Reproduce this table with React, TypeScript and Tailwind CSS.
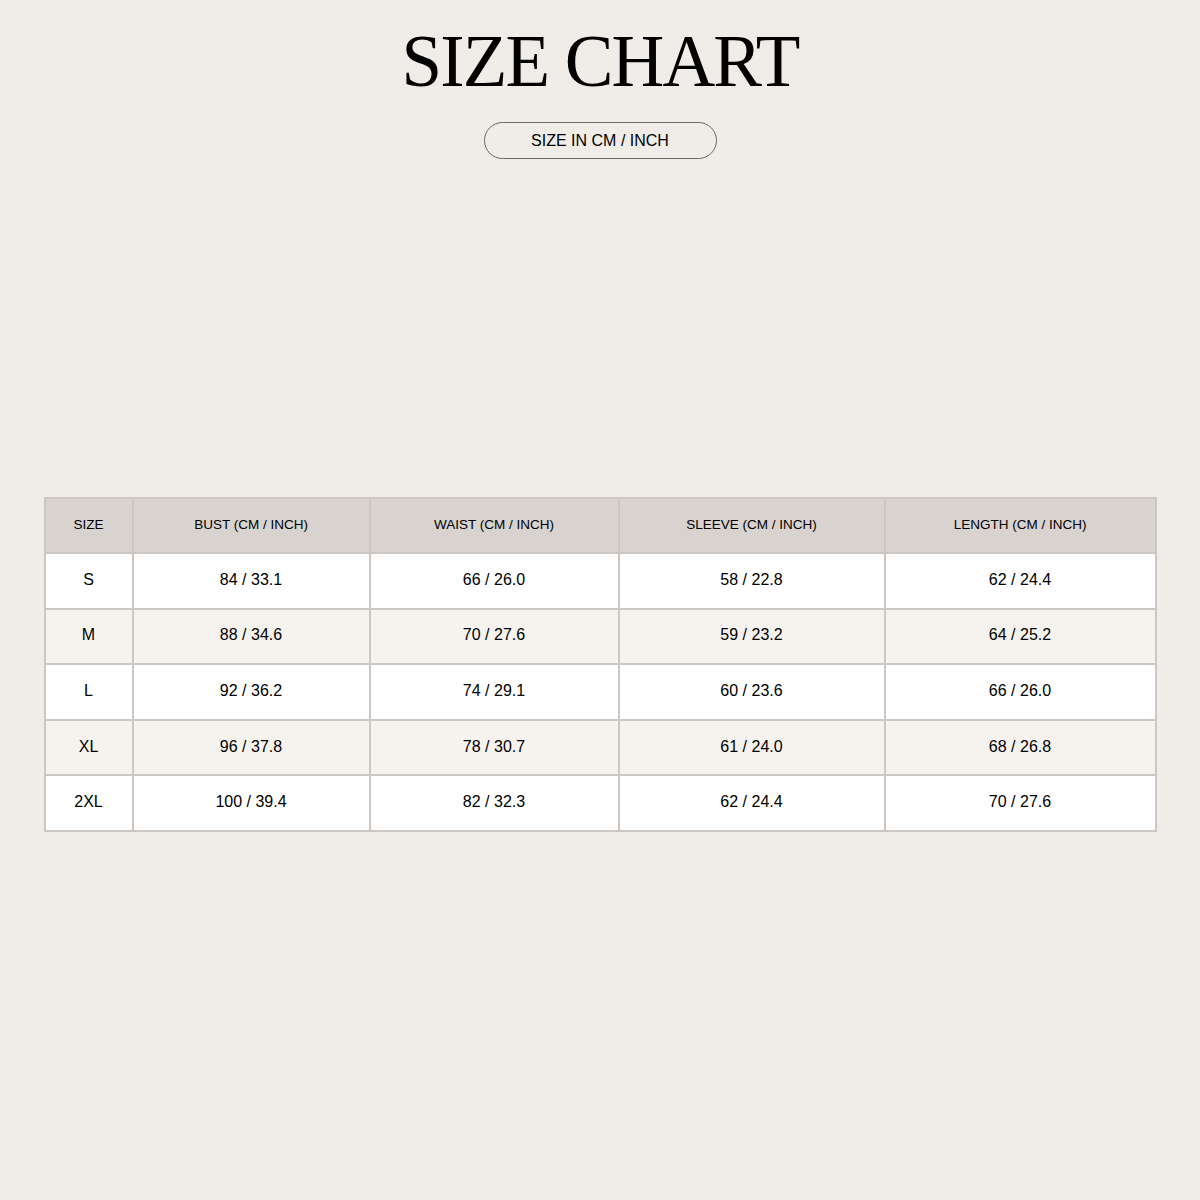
const headers = ['SIZE', 'BUST (CM / INCH)', 'WAIST (CM / INCH)', 'SLEEVE (CM / INCH)', 'LENGTH (CM / INCH)'];

const rows = [
  ['S', '84 / 33.1', '66 / 26.0', '58 / 22.8', '62 / 24.4'],
  ['M', '88 / 34.6', '70 / 27.6', '59 / 23.2', '64 / 25.2'],
  ['L', '92 / 36.2', '74 / 29.1', '60 / 23.6', '66 / 26.0'],
  ['XL', '96 / 37.8', '78 / 30.7', '61 / 24.0', '68 / 26.8'],
  ['2XL', '100 / 39.4', '82 / 32.3', '62 / 24.4', '70 / 27.6'],
];

const colWidths = ['w-[88px]', 'w-[237px]', 'w-[249px]', 'w-[266px]', 'w-[271px]'];

export default function App() {
  return (
    <div className="w-[1200px] h-[1200px] bg-[#f0ede8] flex flex-col items-center font-['Liberation_Sans',Arial,sans-serif] text-black">
      {/* Title */}
      <h1 className="mt-[20px] text-[73px] leading-[84px] tracking-[-0.025em] font-['Liberation_Serif','Times_New_Roman',serif] font-normal">
        SIZE CHART
      </h1>
      <div className="mt-[18px] w-[233px] h-[37px] rounded-full border border-[#6b6866] flex items-center justify-center text-[16px]">
        SIZE IN CM / INCH
      </div>

      {/* Table */}
      <table className="mt-[338px] w-[1111px] border-collapse border-2 border-[#ccc7c3] table-fixed">
        <colgroup>
          {colWidths.map((w, i) => (
            <col key={i} className={w} />
          ))}
        </colgroup>
        <thead>
          <tr className="bg-[#d8d3cf] h-[55px]">
            {headers.map((h) => (
              <th key={h} className="border-2 border-[#ccc7c3] font-normal text-[13.5px] text-center pb-[1px]">
                {h}
              </th>
            ))}
          </tr>
        </thead>
        <tbody>
          {rows.map((r, i) => (
            <tr key={r[0]} className={`h-[55.6px] ${i % 2 === 0 ? 'bg-white' : 'bg-[#f6f3ef]'}`}>
              {r.map((c, j) => (
                <td key={j} className="border-2 border-[#ccc7c3] text-[16px] text-center pb-[2px]">
                  {c}
                </td>
              ))}
            </tr>
          ))}
        </tbody>
      </table>
    </div>
  );
}
